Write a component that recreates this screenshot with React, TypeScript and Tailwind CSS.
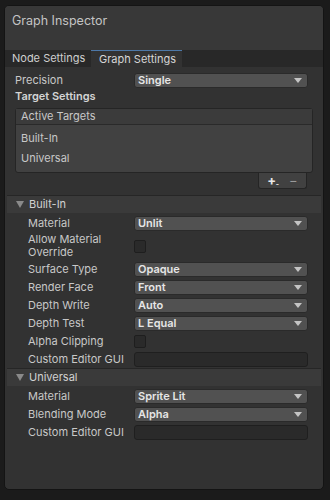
import React from "react";

function Dropdown({ value }: { value: string }) {
  return (
    <div className="flex h-[15px] flex-1 items-center justify-between rounded-[3px] border border-[#2a2a2a] bg-[#515151] pl-[3px] pr-[5px]">
      <span className="text-[11px] font-semibold leading-none text-[#e6e6e6]">{value}</span>
      <svg width="8" height="5" viewBox="0 0 8 5">
        <path d="M0 0H8L4 5Z" fill="#c4c4c4" />
      </svg>
    </div>
  );
}

function Checkbox() {
  return <div className="h-[13px] w-[12px] rounded-[2px] border border-[#1e1e1e] bg-[#2a2a2a]" />;
}

function TextField() {
  return <div className="h-[15px] flex-1 rounded-[3px] border border-[#1f1f1f] bg-[#2a2a2a]" />;
}

function Row({
  label,
  children,
  tall,
}: {
  label: React.ReactNode;
  children: React.ReactNode;
  tall?: boolean;
}) {
  return (
    <div className={`flex items-center ${tall ? "h-[28px]" : "h-[18px]"}`}>
      <div className="w-[127px] shrink-0 pl-[21px] text-[11px] leading-[13px] whitespace-nowrap text-[#c8c8c8]">{label}</div>
      <div className="flex flex-1 items-center pr-[13px]">{children}</div>
    </div>
  );
}

function SectionHeader({ title }: { title: string }) {
  return (
    <div className="flex h-[18px] items-center gap-[5px] border-t border-[#262626] bg-[#3a3a3a] pl-[9px]">
      <svg width="8" height="7" viewBox="0 0 8 7">
        <path d="M0 0H8L4 7Z" fill="#8a8a8a" />
      </svg>
      <span className="text-[11px] text-[#d2d2d2]">{title}</span>
    </div>
  );
}

export default function App() {
  return (
    <div
      className="h-[500px] w-[330px] bg-[#1b1b1b] pt-[5px] pl-[4px] pr-[6px]"
      style={{ fontFamily: "Inter, 'Noto Sans', sans-serif" }}
    >
      <div className="flex h-[485px] flex-col overflow-hidden rounded-[5px] border border-[#141414] bg-[#323232]">
        <div className="h-[44px] bg-[#383838] pl-[7px] pt-[9px] text-[12.5px] leading-none text-[#c4c4c4]">Graph Inspector</div>

        <div className="flex h-[17px] bg-[#282828]">
          <div className="flex h-[17px] w-[86px] items-center pl-[7px] text-[11px] whitespace-nowrap text-[#cfcfcf]">Node Settings</div>
          <div className="flex h-[17px] w-[91px] items-center border-t border-[#4d78a8] bg-[#323232] pl-[8px] text-[11px] whitespace-nowrap text-[#d6d6d6]">
            Graph Settings
          </div>
        </div>

        <div className="pt-[4px]">
          <div className="flex h-[18px] items-center">
            <div className="w-[129px] shrink-0 pl-[10px] text-[11px] text-[#c8c8c8]">Precision</div>
            <div className="flex flex-1 pr-[15px]">
              <Dropdown value="Single" />
            </div>
          </div>
          <div className="pl-[10px] text-[11px] font-semibold leading-[14px] text-[#d4d4d4]">Target Settings</div>

          <div className="mx-[10px] mt-[5px] rounded-[3px] border border-[#252525] bg-[#414141]">
            <div className="flex h-[16px] items-center border-b border-[#2a2a2a] bg-[#3b3b3b] pl-[5px] text-[11px] text-[#c8c8c8]">
              Active Targets
            </div>
            <div className="pt-[3px] pb-[4px]">
              <div className="flex h-[20px] items-center pl-[5px] text-[11px] text-[#c8c8c8]">Built-In</div>
              <div className="flex h-[20px] items-center pl-[5px] text-[11px] text-[#c8c8c8]">Universal</div>
            </div>
          </div>
          <div className="flex justify-end pr-[16px]">
            <div className="flex h-[16px] w-[49px] items-center justify-center gap-[13px] rounded-b-[3px] border border-t-0 border-[#252525] bg-[#414141]">
              <span className="relative text-[13px] font-bold leading-none text-[#e8e8e8]">
                +
                <span className="absolute bottom-[-1px] right-[-3px] text-[7px] leading-none">-</span>
              </span>
              <span className="text-[13px] leading-none text-[#9a9a9a]">−</span>
            </div>
          </div>
        </div>

        <div className="mx-[2px] mt-[6px]">
          <SectionHeader title="Built-In" />
          <div className="pt-[1px]">
            <Row label="Material">
              <Dropdown value="Unlit" />
            </Row>
            <Row label={<>Allow Material<br />Override</>} tall>
              <Checkbox />
            </Row>
            <Row label="Surface Type">
              <Dropdown value="Opaque" />
            </Row>
            <Row label="Render Face">
              <Dropdown value="Front" />
            </Row>
            <Row label="Depth Write">
              <Dropdown value="Auto" />
            </Row>
            <Row label="Depth Test">
              <Dropdown value="L Equal" />
            </Row>
            <Row label="Alpha Clipping">
              <Checkbox />
            </Row>
            <Row label="Custom Editor GUI">
              <TextField />
            </Row>
          </div>
          <SectionHeader title="Universal" />
          <div className="pt-[1px]">
            <Row label="Material">
              <Dropdown value="Sprite Lit" />
            </Row>
            <Row label="Blending Mode">
              <Dropdown value="Alpha" />
            </Row>
            <Row label="Custom Editor GUI">
              <TextField />
            </Row>
          </div>
        </div>
      </div>
    </div>
  );
}
